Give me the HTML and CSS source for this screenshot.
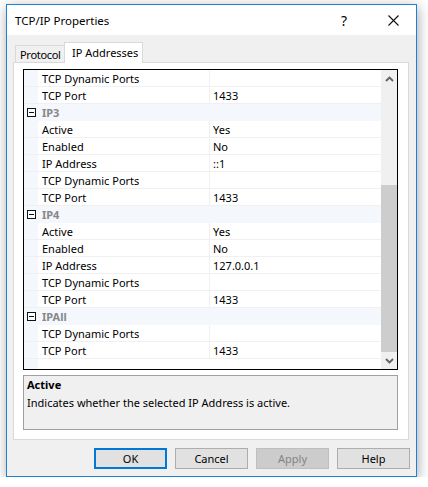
FILE: index.html
```html
<!DOCTYPE html>
<html>
<head>
<meta charset="utf-8">
<link rel="stylesheet" href="styles.css">
</head>
<body>
<div class="window">
  <div class="titlebar">
    <span class="title">TCP/IP Properties</span>
    <span class="help">?</span>
    <span class="close"><svg width="11" height="11" viewBox="0 0 11 11"><path d="M0.5 0.5 L10.5 10.5 M10.5 0.5 L0.5 10.5" stroke="#111" stroke-width="1.1" fill="none"/></svg></span>
  </div>
  <div class="body">
    <div class="tabstrip">
      <div class="tab">Protocol</div>
      <div class="tab active">IP Addresses</div>
    </div>
    <div class="panel">
      <div class="grid">
        <div class="rows">
          <div class="row"><div class="gut"></div><div class="name">TCP Dynamic Ports</div><div class="val"></div></div>
          <div class="row"><div class="gut"></div><div class="name">TCP Port</div><div class="val">1433</div></div>
          <div class="row cat"><div class="gut"><span class="minus"></span></div><div class="cname">IP3</div></div>
          <div class="row"><div class="gut"></div><div class="name">Active</div><div class="val">Yes</div></div>
          <div class="row"><div class="gut"></div><div class="name">Enabled</div><div class="val">No</div></div>
          <div class="row"><div class="gut"></div><div class="name">IP Address</div><div class="val">::1</div></div>
          <div class="row"><div class="gut"></div><div class="name">TCP Dynamic Ports</div><div class="val"></div></div>
          <div class="row"><div class="gut"></div><div class="name">TCP Port</div><div class="val">1433</div></div>
          <div class="row cat"><div class="gut"><span class="minus"></span></div><div class="cname">IP4</div></div>
          <div class="row"><div class="gut"></div><div class="name">Active</div><div class="val">Yes</div></div>
          <div class="row"><div class="gut"></div><div class="name">Enabled</div><div class="val">No</div></div>
          <div class="row"><div class="gut"></div><div class="name">IP Address</div><div class="val">127.0.0.1</div></div>
          <div class="row"><div class="gut"></div><div class="name">TCP Dynamic Ports</div><div class="val"></div></div>
          <div class="row"><div class="gut"></div><div class="name">TCP Port</div><div class="val">1433</div></div>
          <div class="row cat"><div class="gut"><span class="minus"></span></div><div class="cname">IPAll</div></div>
          <div class="row"><div class="gut"></div><div class="name">TCP Dynamic Ports</div><div class="val"></div></div>
          <div class="row"><div class="gut"></div><div class="name">TCP Port</div><div class="val">1433</div></div>
        </div>
        <div class="scrollbar">
          <div class="arrow"><svg width="9" height="6" viewBox="0 0 9 6"><path d="M1 5 L4.5 1.5 L8 5" stroke="#606060" stroke-width="1.8" fill="none"/></svg></div>
          <div class="track"><div class="thumb"></div></div>
          <div class="arrow"><svg width="9" height="6" viewBox="0 0 9 6"><path d="M1 1 L4.5 4.5 L8 1" stroke="#606060" stroke-width="1.8" fill="none"/></svg></div>
        </div>
      </div>
      <div class="desc">
        <div class="dtitle">Active</div>
        <div class="dtext">Indicates whether the selected IP Address is active.</div>
      </div>
    </div>
    <div class="buttons">
      <div class="btn default">OK</div>
      <div class="btn">Cancel</div>
      <div class="btn disabled">Apply</div>
      <div class="btn">Help</div>
    </div>
  </div>
</div>
</body>
</html>
```
FILE: styles.css
```css
html, body {
  margin: 0;
  padding: 0;
  background: #ffffff;
}
body {
  font-family: "Noto Sans", "Open Sans", sans-serif;
  font-size: 11px;
  color: #000;
  padding: 4px 0 0 6px;
}
.window {
  width: 409px;
  height: 471px;
  border: 1px solid #1883d7;
  box-shadow: 1px 3px 12px rgba(0,0,0,0.35);
  display: flex;
  flex-direction: column;
  background: #f0f0f0;
}
.titlebar {
  height: 30px;
  background: #fff;
  display: flex;
  align-items: center;
  flex: none;
}
.title {
  padding-left: 8px;
  padding-top: 2px;
  flex: 1;
  line-height: 16px;
  font-size: 11.5px;
}
.help {
  width: 14px;
  text-align: center;
  font-size: 14px;
  margin-right: 37px;
  padding-top: 1px;
}
.close {
  width: 11px;
  height: 11px;
  margin-right: 17px;
  display: flex;
  margin-top: 1px;
}
.body {
  flex: 1;
  display: flex;
  flex-direction: column;
}
.tabstrip {
  margin-top: 7px;
  height: 20px;
  padding-left: 8px;
  display: flex;
  align-items: flex-end;
}
.tab {
  height: 16px;
  width: 44px;
  border: 1px solid #d9d9d9;
  border-bottom: none;
  border-right: none;
  background: #f0f0f0;
  line-height: 17px;
  padding-left: 4px;
  white-space: nowrap;
  letter-spacing: -0.3px;
}
.tab.active {
  height: 20px;
  width: 70px;
  padding-left: 7px;
  border-right: 1px solid #d9d9d9;
  background: #fff;
  margin-bottom: -1px;
  position: relative;
  z-index: 1;
  line-height: 19px;
  letter-spacing: 0;
}
.panel {
  margin-left: 6px;
  width: 375px;
  height: 362px;
  border: 1px solid #d9d9d9;
  background: #fff;
  padding: 6px 10px 8px 9px;
  display: flex;
  flex-direction: column;
}
.grid {
  height: 299px;
  border: 1px solid #000;
  display: flex;
  background: #fff;
}
.rows {
  width: 357px;
  background: linear-gradient(to right, #f4f7fc 14px, #fff 14px);
}
.row {
  display: flex;
  height: 16px;
  border-bottom: 1px solid #f0f0f0;
  line-height: 18px;
}
.gut {
  width: 14px;
  flex: none;
  background: #f4f7fc;
  position: relative;
}
.name {
  width: 167px;
  padding-left: 4px;
  border-right: 1px solid #f0f0f0;
  white-space: nowrap;
}
.val {
  flex: 1;
  padding-left: 3px;
}
.row.cat {
  background: #f4f7fc;
  border-bottom-color: #f4f7fc;
}
.cname {
  padding-left: 4px;
  font-weight: bold;
  color: #888;
}
.minus {
  position: absolute;
  left: 3px;
  top: 4px;
  width: 7px;
  height: 7px;
  border: 1px solid #111;
  background: #fff;
}
.minus::after {
  content: "";
  position: absolute;
  left: 1px;
  top: 3px;
  width: 5px;
  height: 1px;
  background: #111;
}
.scrollbar {
  width: 16px;
  background: #f0f0f0;
  display: flex;
  flex-direction: column;
}
.arrow {
  height: 17px;
  display: flex;
  align-items: center;
  justify-content: center;
  flex: none;
}
.track {
  flex: 1;
  padding-top: 98px;
}
.thumb {
  height: 167px;
  background: #cdcdcd;
}
.desc {
  margin-top: 5px;
  height: 53px;
  border: 1px solid #a0a0a0;
  background: #f0f0f0;
  padding: 0 3px;
}
.dtitle {
  font-weight: bold;
  line-height: 16px;
  margin-top: 1px;
}
.dtext {
  line-height: 19px;
}
.buttons {
  display: flex;
  justify-content: flex-end;
  gap: 8px;
  padding-right: 6px;
  margin-top: 8px;
}
.btn {
  width: 71px;
  height: 19px;
  border: 1px solid #adadad;
  background: #e1e1e1;
  text-align: center;
  line-height: 20px;
}
.btn.default {
  border: 2px solid #0078d7;
  width: 69px;
  height: 17px;
  line-height: 18px;
}
.btn.disabled {
  background: #cccccc;
  border-color: #bfbfbf;
  color: #838383;
}
```
